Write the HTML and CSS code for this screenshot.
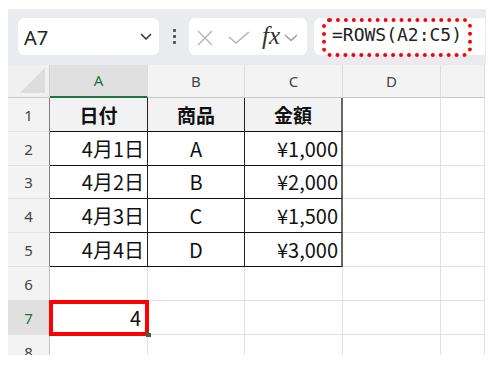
FILE: index.html
```html
<!DOCTYPE html>
<html lang="ja">
<head>
    <meta charset="UTF-8"/>
    <title>ROWS関数</title>
    <link rel="stylesheet" href="styles.css">
</head>
<body>
<div class="app">
    <!-- 数式バー -->
    <div class="toolbar">
        <div class="namebox">
            <span class="name">A7</span>
            <svg class="name-chev" width="12" height="7" viewBox="0 0 12 7"><polyline points="1,1 6,6 11,1" fill="none" stroke="#333" stroke-width="1.5"/></svg>
        </div>
        <div class="grip"><i></i><i></i><i></i></div>
        <div class="fxbox">
            <svg class="ico-x" width="16" height="16" viewBox="0 0 16 16"><path d="M1 1 L15 15 M15 1 L1 15" stroke="#b4b4b4" stroke-width="1.4" fill="none"/></svg>
            <svg class="ico-ok" width="22" height="13" viewBox="0 0 22 13"><polyline points="1,6 8,12 21,1" fill="none" stroke="#b4b4b4" stroke-width="1.4"/></svg>
            <span class="fx">fx</span>
            <svg class="fx-chev" width="14" height="8" viewBox="0 0 14 8"><polyline points="1,1 7,6.5 13,1" fill="none" stroke="#9a9a9a" stroke-width="1.3"/></svg>
        </div>
        <div class="formula"><span class="formula-text">=ROWS(A2:C5)</span></div>
    </div>

    <!-- シート -->
    <div class="sheet">
        <div class="corner"></div>
        <div class="colhead active">A</div>
        <div class="colhead">B</div>
        <div class="colhead">C</div>
        <div class="colhead">D</div>
        <div class="colhead"></div>

        <div class="rowhead edge">1</div>
        <div class="cell t th">日付</div>
        <div class="cell t th">商品</div>
        <div class="cell t th last">金額</div>
        <div class="cell"></div>
        <div class="cell"></div>

        <div class="rowhead edge">2</div>
        <div class="cell t r">4月1日</div>
        <div class="cell t c">A</div>
        <div class="cell t r last">¥1,000</div>
        <div class="cell"></div>
        <div class="cell"></div>

        <div class="rowhead edge">3</div>
        <div class="cell t r">4月2日</div>
        <div class="cell t c">B</div>
        <div class="cell t r last">¥2,000</div>
        <div class="cell"></div>
        <div class="cell"></div>

        <div class="rowhead edge">4</div>
        <div class="cell t r">4月3日</div>
        <div class="cell t c">C</div>
        <div class="cell t r last">¥1,500</div>
        <div class="cell"></div>
        <div class="cell"></div>

        <div class="rowhead edge">5</div>
        <div class="cell t r">4月4日</div>
        <div class="cell t c">D</div>
        <div class="cell t r last">¥3,000</div>
        <div class="cell"></div>
        <div class="cell"></div>

        <div class="rowhead">6</div>
        <div class="cell"></div>
        <div class="cell"></div>
        <div class="cell"></div>
        <div class="cell"></div>
        <div class="cell"></div>

        <div class="rowhead active">7</div>
        <div class="cell r sel">4</div>
        <div class="cell"></div>
        <div class="cell"></div>
        <div class="cell"></div>
        <div class="cell"></div>

        <div class="rowhead">8</div>
        <div class="cell"></div>
        <div class="cell"></div>
        <div class="cell"></div>
        <div class="cell"></div>
        <div class="cell"></div>
    </div>
</div>
</body>
</html>
```

FILE: styles.css
```css
* {
    margin: 0;
    padding: 0;
    box-sizing: border-box;
}

body {
    background: #fff;
    font-family: "Noto Sans", "Noto Sans CJK JP", sans-serif;
}

.app {
    width: 478px;
    margin: 9px 0 0 8px;
    background: #e9ebee;
}

.toolbar {
    height: 56px;
    display: flex;
    align-items: flex-start;
    padding: 9px 1px 0 10px;
}

.namebox {
    width: 141px;
    height: 37px;
    background: #fff;
    border-radius: 6px;
    display: flex;
    align-items: center;
    justify-content: space-between;
    padding: 0 7px 0 6px;
}

.name {
    font-size: 20px;
    color: #222;
    line-height: 1;
    padding-top: 3px;
}

.grip {
    width: 30px;
    height: 37px;
    display: flex;
    flex-direction: column;
    align-items: center;
    justify-content: center;
    gap: 3px;
}

.grip i {
    display: block;
    width: 3px;
    height: 3px;
    border-radius: 1px;
    background: #505050;
}

.fxbox {
    width: 118px;
    height: 37px;
    background: #fff;
    border-radius: 6px;
    display: flex;
    align-items: center;
    padding-left: 8px;
}

.ico-x {
    margin-top: 2px;
}

.ico-ok {
    margin: 2px 0 0 15px;
}

.fx {
    margin-left: 12px;
    font-family: "Liberation Serif", serif;
    font-style: italic;
    font-size: 25px;
    line-height: 1;
    color: #333;
    padding-bottom: 2px;
}

.fx-chev {
    margin: 2px 0 0 4px;
}

.formula {
    flex: 1;
    height: 37px;
    margin-left: 7px;
    background: #fff;
    border-radius: 6px 0 0 6px;
    padding-left: 8px;
}

.formula-text {
    display: inline-block;
    height: 39px;
    border: 4px dotted #ff0000;
    border-radius: 8px;
    padding: 0 6px;
    font-family: "DejaVu Sans Mono", monospace;
    font-size: 18px;
    line-height: 26px;
    color: #222;
}

/* シート */
.sheet {
    height: 290px;
    overflow: hidden;
    display: grid;
    grid-template-columns: 42px 98px 97px 98px 98px 44px;
    grid-template-rows: 33px 34px 34px 33px 34px 34px 34px 34px 34px;
    background: #fff;
}

.sheet > div {
    border-right: 1px solid #e1e1e1;
    border-bottom: 1px solid #e1e1e1;
}

.corner {
    background: #f0f0f0;
    position: relative;
    border-right-color: #d0d0d0 !important;
    border-bottom-color: #c8c8c8 !important;
}

.corner::after {
    content: "";
    position: absolute;
    right: 4px;
    bottom: 4px;
    width: 0;
    height: 0;
    border-left: 25px solid transparent;
    border-bottom: 25px solid #dcdcdc;
}

.colhead {
    background: #f3f3f3;
    border-right-color: #dcdcdc !important;
    border-bottom-color: #c8c8c8 !important;
    color: #444;
    font-size: 15px;
    display: flex;
    align-items: center;
    justify-content: center;
    padding-bottom: 1px;
}

.colhead.active {
    background: #e0e0e0;
    color: #217346;
    border-bottom: 2px solid #217346 !important;
}

.rowhead {
    background: #f3f3f3;
    border-right-color: #c0c0c0 !important;
    color: #444;
    font-size: 15px;
    display: flex;
    align-items: center;
    justify-content: center;
}

.rowhead.edge {
    border-right-color: #808080 !important;
}

.rowhead.active {
    background: #e0e0e0;
    color: #217346;
}

.cell {
    font-family: "Noto Sans CJK JP", sans-serif;
    font-size: 20px;
    line-height: 1;
    color: #111;
    display: flex;
    align-items: center;
    padding: 0 3px;
}

.cell.t {
    border-right-color: #222 !important;
    border-bottom-color: #111 !important;
}

.cell.last {
    border-right: 2px solid #666 !important;
}

.th {
    background: #f2f2f2;
    font-size: 19px;
    font-weight: bold;
    justify-content: center;
}

.r {
    justify-content: flex-end;
}

.c {
    justify-content: center;
}

.sel {
    position: relative;
    outline: 4px solid #ff0000;
    outline-offset: -3px;
    padding-right: 6px;
}

.sel::after {
    content: "";
    position: absolute;
    right: -4px;
    bottom: -3px;
    width: 5px;
    height: 4px;
    background: #217346;
}
```
